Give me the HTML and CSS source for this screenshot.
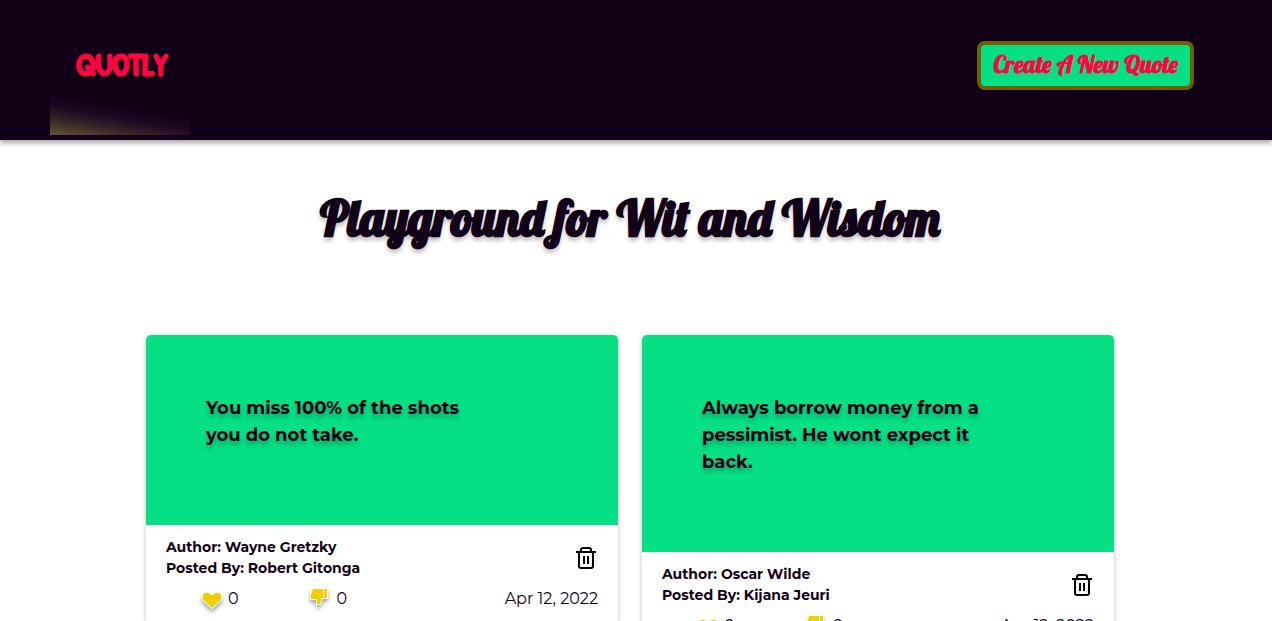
FILE: index.html
```html
<!DOCTYPE html>
<html lang="en">
<head>
<meta charset="utf-8">
<meta name="viewport" content="width=device-width, initial-scale=1">
<title>Quotly</title>
<link rel="stylesheet" href="styles.css">
</head>
<body>
<header class="navbar">
  <a class="logo" href="#">QUOTLY</a>
  <button class="create" type="button">Create A New Quote</button>
</header>
<main class="content">
  <h1 class="title">Playground for Wit and Wisdom</h1>
  <div class="cards">
    <article class="card">
      <div class="quote"><p class="quote-text">You miss 100% of the shots you do not take.</p></div>
      <div class="details">
        <div class="credits">
          <p class="names">Author: Wayne Gretzky<br>Posted By: Robert Gitonga</p>
          <button class="icon-button" type="button" aria-label="Delete quote">
            <svg class="trash" viewBox="0 0 24 24"><path d="M2 6h20M7 5V4q0-2 2-2h6q2 0 2 2v1M5 6v14q0 2 2 2h10q2 0 2-2V6M10 10v8M14 10v8"/></svg>
          </button>
        </div>
        <div class="stats">
          <button class="vote" type="button" aria-label="Upvote"><svg class="heart" viewBox="0 0 20 20"><path d="M10 18L1.500 10C-1 6.500 2 1.500 6 3Q8.700 3.500 10 6Q11.300 3.500 14 3C18 1.500 21 6.500 18.500 10Z"/></svg><span>0</span></button>
          <button class="vote" type="button" aria-label="Downvote"><svg class="thumb" viewBox="0 0 20 20"><path d="M4 2H18V11H13L11 17H8V12H2V8z"/><path class="cuff" d="M14.500 2v9"/></svg><span>0</span></button>
          <time class="date" datetime="2022-04-12">Apr 12, 2022</time>
        </div>
      </div>
    </article>
    <article class="card">
      <div class="quote"><p class="quote-text">Always borrow money from a pessimist. He wont expect it back.</p></div>
      <div class="details">
        <div class="credits">
          <p class="names">Author: Oscar Wilde<br>Posted By: Kijana Jeuri</p>
          <button class="icon-button" type="button" aria-label="Delete quote">
            <svg class="trash" viewBox="0 0 24 24"><path d="M2 6h20M7 5V4q0-2 2-2h6q2 0 2 2v1M5 6v14q0 2 2 2h10q2 0 2-2V6M10 10v8M14 10v8"/></svg>
          </button>
        </div>
        <div class="stats">
          <button class="vote" type="button" aria-label="Upvote"><svg class="heart" viewBox="0 0 20 20"><path d="M10 18L1.500 10C-1 6.500 2 1.500 6 3Q8.700 3.500 10 6Q11.300 3.500 14 3C18 1.500 21 6.500 18.500 10Z"/></svg><span>0</span></button>
          <button class="vote" type="button" aria-label="Downvote"><svg class="thumb" viewBox="0 0 20 20"><path d="M4 2H18V11H13L11 17H8V12H2V8z"/><path class="cuff" d="M14.500 2v9"/></svg><span>0</span></button>
          <time class="date" datetime="2022-04-12">Apr 12, 2022</time>
        </div>
      </div>
    </article>
  </div>
</main>
</body>
</html>
```
FILE: styles.css
```css
* { box-sizing: border-box; }

html { overflow: hidden; }

body {
  margin: 0;
  background: #fff;
  color: #120018;
  font-family: Montserrat, Inter, "Open Sans", sans-serif;
  font-size: 16px;
  line-height: 24px;
}

button {
  margin: 0;
  padding: 0;
  border: 0;
  background: none;
  color: inherit;
  font: inherit;
  cursor: pointer;
}

.navbar {
  display: flex;
  align-items: flex-start;
  justify-content: space-between;
  height: 140px;
  padding: 0 78px 0 50px;
  background: #120018;
  box-shadow: 0 3px 5px rgba(0, 0, 0, 0.35);
}

.logo {
  width: 140px;
  height: 135px;
  padding: 51px 0 0 26px;
  background: linear-gradient(10deg, #635632 0%, #3b2a27 9%, #1e0822 18%, #120018 26%);
  color: #ff0440;
  font: 700 30px/26px "Patrick Hand", "Comic Neue", Chewy, "Caveat Brush", "Liberation Sans", sans-serif;
  text-decoration: none;
  -webkit-text-stroke: 2px #ff0440;
}

.create {
  margin-top: 41px;
  padding: 4px 12px 7px;
  border: 4px solid #735f00;
  border-radius: 8px;
  background: #06e085;
  color: #ff0440;
  font: 700 24px/30px Lobster, "Liberation Serif", serif;
}

.content {
  padding: 45px 158px 48px 146px;
}

.title {
  margin: 0 0 84px;
  font: 700 48px/66px Lobster, "Liberation Serif", serif;
  text-align: center;
  text-shadow: 0 4px 4px rgba(0, 0, 0, 0.25);
  -webkit-text-stroke: 1px #120018;
}

.cards {
  display: grid;
  grid-template-columns: 1fr 1fr;
  align-items: start;
  gap: 24px;
}

.card {
  overflow: hidden;
  border-radius: 5px;
  background: #fff;
  box-shadow: 0 2px 5px rgba(0, 0, 0, 0.25);
}

.quote {
  padding: 60px 60px 76px;
  background: #06e085;
}

.quote-text {
  max-width: 284px;
  margin: 0;
  font-size: 18px;
  font-weight: 700;
  line-height: 27px;
  text-shadow: 0 4px 4px rgba(0, 0, 0, 0.25);
}

.details {
  padding: 12px 20px;
}

.credits {
  display: flex;
  align-items: center;
  justify-content: space-between;
}

.names {
  margin: 0;
  font-size: 14px;
  font-weight: 700;
  line-height: 21px;
}

.icon-button {
  display: flex;
}

.trash {
  width: 24px;
  height: 24px;
  fill: none;
  stroke: #000;
  stroke-width: 2;
}

.stats {
  display: flex;
  align-items: center;
  gap: 70px;
  padding: 8px 0 0 36px;
}

.vote {
  display: flex;
  align-items: center;
  gap: 6px;
}

.heart,
.thumb {
  width: 20px;
  height: 20px;
  overflow: visible;
  fill: #f2d000;
  stroke: #fff;
  stroke-width: 2;
  paint-order: stroke;
  filter: drop-shadow(0 3px 2px rgba(0, 0, 0, 0.35));
}

.heart { margin-top: 2px; }

.thumb {
  margin: 0 2px 4px 0;
}

.cuff { stroke-width: 1; }

.date { margin-left: auto; }
```
